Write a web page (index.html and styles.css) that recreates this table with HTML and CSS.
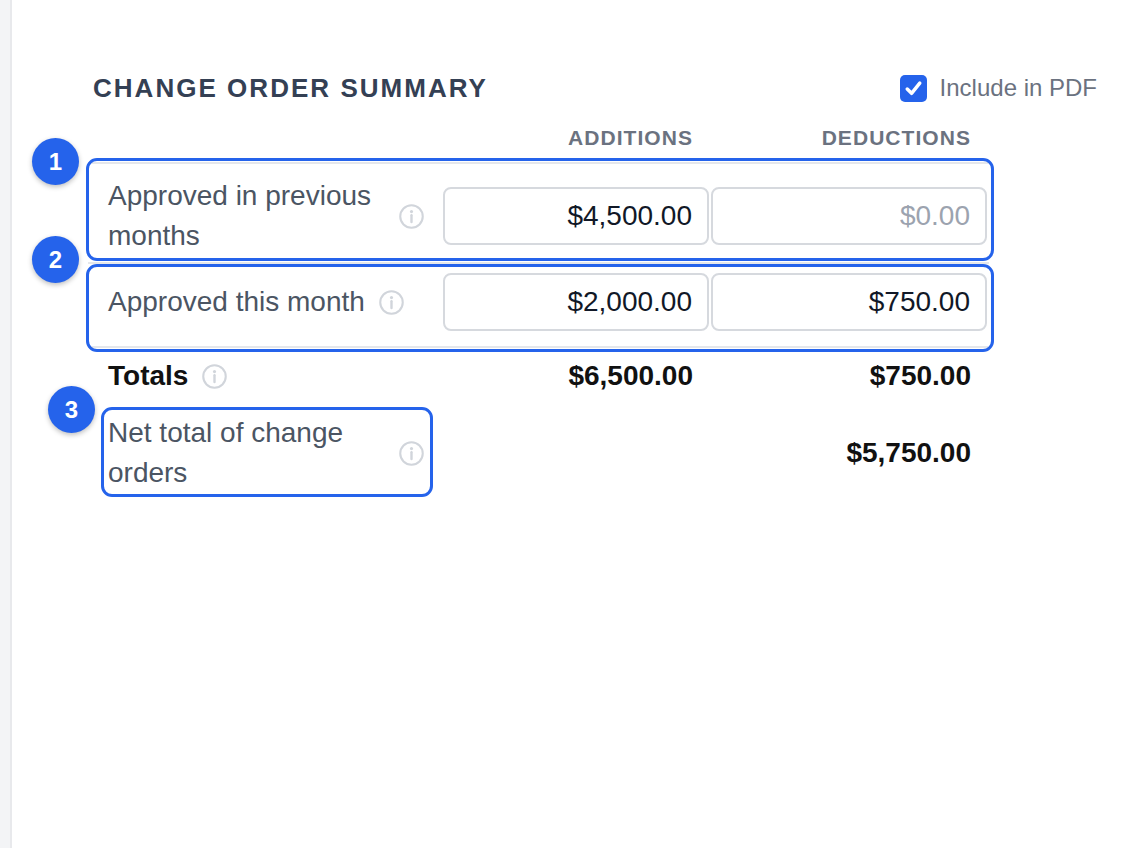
FILE: index.html
```html
<!DOCTYPE html>
<html lang="en">
<head>
<meta charset="utf-8">
<title>Change Order Summary</title>
<link rel="stylesheet" href="styles.css">
</head>
<body>
<div class="page">
  <aside class="rail"></aside>
  <main class="main">
    <section class="summary">
      <header class="summary-head">
        <h2 class="title">CHANGE ORDER SUMMARY</h2>
        <label class="pdf-toggle">
          <span class="checkbox">
            <svg viewBox="0 0 28 28" width="27" height="27"><path d="M7.5 14.5 L12 19 L20.5 8.5" fill="none" stroke="#fff" stroke-width="3.6" stroke-linecap="round" stroke-linejoin="round"/></svg>
          </span>
          <span class="pdf-text">Include in PDF</span>
        </label>
      </header>

      <div class="table">
        <div class="grid colheads">
          <div></div>
          <div class="colhead add">ADDITIONS</div>
          <div class="colhead ded">DEDUCTIONS</div>
        </div>

        <div class="grid row row-prev">
          <div class="label-cell">
            <span class="label-text">Approved in previous months</span>
            <svg class="info" viewBox="0 0 24 24" width="25" height="25"><circle cx="12" cy="12" r="10.8" fill="none" stroke="#d1d5db" stroke-width="2"/><circle cx="12" cy="7.3" r="1.5" fill="#d1d5db"/><path d="M12 10.8 V17.3" stroke="#d1d5db" stroke-width="2.3" stroke-linecap="round"/></svg>
          </div>
          <div class="cell add-cell"><div class="input">$4,500.00</div></div>
          <div class="cell ded-cell"><div class="input placeholder">$0.00</div></div>
        </div>

        <div class="grid row row-month">
          <div class="label-cell">
            <span class="label-text">Approved this month</span>
            <svg class="info" viewBox="0 0 24 24" width="25" height="25"><circle cx="12" cy="12" r="10.8" fill="none" stroke="#d1d5db" stroke-width="2"/><circle cx="12" cy="7.3" r="1.5" fill="#d1d5db"/><path d="M12 10.8 V17.3" stroke="#d1d5db" stroke-width="2.3" stroke-linecap="round"/></svg>
          </div>
          <div class="cell add-cell"><div class="input">$2,000.00</div></div>
          <div class="cell ded-cell"><div class="input">$750.00</div></div>
        </div>

        <div class="grid totals">
          <div class="label-cell">
            <span class="label-text strong">Totals</span>
            <svg class="info" viewBox="0 0 24 24" width="25" height="25"><circle cx="12" cy="12" r="10.8" fill="none" stroke="#d1d5db" stroke-width="2"/><circle cx="12" cy="7.3" r="1.5" fill="#d1d5db"/><path d="M12 10.8 V17.3" stroke="#d1d5db" stroke-width="2.3" stroke-linecap="round"/></svg>
          </div>
          <div class="value add-val">$6,500.00</div>
          <div class="value ded-val">$750.00</div>
        </div>

        <div class="grid net">
          <div class="label-cell">
            <span class="label-text">Net total of change orders</span>
            <svg class="info" viewBox="0 0 24 24" width="25" height="25"><circle cx="12" cy="12" r="10.8" fill="none" stroke="#d1d5db" stroke-width="2"/><circle cx="12" cy="7.3" r="1.5" fill="#d1d5db"/><path d="M12 10.8 V17.3" stroke="#d1d5db" stroke-width="2.3" stroke-linecap="round"/></svg>
          </div>
          <div></div>
          <div class="value ded-val">$5,750.00</div>
        </div>
      </div>

      <div class="callout box-1"></div>
      <div class="callout box-2"></div>
      <div class="callout box-3"></div>
      <div class="badge badge-1">1</div>
      <div class="badge badge-2">2</div>
      <div class="badge badge-3">3</div>
    </section>
  </main>
</div>
</body>
</html>
```

FILE: styles.css
```css
* { box-sizing: border-box; }

html, body {
  margin: 0;
  padding: 0;
  background: #ffffff;
  font-family: "Liberation Sans", Arial, Helvetica, sans-serif;
}

.page {
  display: flex;
  min-height: 848px;
}

.rail {
  width: 12px;
  flex: 0 0 12px;
  background: #f3f4f6;
  border-right: 2px solid #e8e9ec;
}

.main {
  flex: 1;
  padding: 68px 33px 0 76px;
}

.summary {
  position: relative;
}

.summary-head {
  display: flex;
  justify-content: space-between;
  align-items: center;
  height: 40px;
}

.title {
  margin: 0 0 0 5px;
  font-size: 26px;
  font-weight: 700;
  letter-spacing: 0.078em;
  color: #344054;
  line-height: 40px;
}

.pdf-toggle {
  display: flex;
  align-items: center;
  gap: 13px;
}

.checkbox {
  width: 27px;
  height: 27px;
  border-radius: 5px;
  background: #2563eb;
  display: flex;
  align-items: center;
  justify-content: center;
}

.checkbox svg { display: block; }

.pdf-text {
  font-size: 24px;
  color: #6b7280;
}

.table {
  width: 901px;
}

.grid {
  display: grid;
  grid-template-columns: 353px 268px 280px;
  align-items: center;
}

.colheads {
  margin-top: 10px;
  height: 40px;
  margin-bottom: 4px;
}

.colhead {
  text-align: right;
  font-size: 21px;
  font-weight: 700;
  letter-spacing: 0.05em;
  color: #6b7280;
}

.colhead.add { padding-right: 16px; }
.colhead.ded { padding-right: 18px; }

.row {
  border-top: 2px solid #e5e7eb;
}

.row-prev { padding: 12px 0 6px; }
.row-month {
  padding: 9px 0 15px;
  border-bottom: 2px solid #e5e7eb;
}

.label-cell {
  display: flex;
  align-items: center;
  gap: 14px;
  padding: 0 17px 0 20px;
}

.label-text {
  font-size: 28px;
  line-height: 40px;
  color: #4b5563;
}

.label-text.strong {
  font-weight: 700;
  color: #111111;
}

.info { flex: 0 0 25px; display: block; }

.add-cell { padding-left: 2px; }
.ded-cell { padding: 0 2px; }

.input {
  height: 58px;
  border: 2px solid #d6d9de;
  border-radius: 8px;
  background: #fff;
  display: flex;
  align-items: center;
  justify-content: flex-end;
  padding-right: 15px;
  font-size: 28px;
  color: #111827;
}

.input.placeholder { color: #9ca3af; }

.totals { padding: 8px 0; }
.net { padding-top: 9px; }

.value {
  text-align: right;
  font-size: 28px;
  font-weight: 700;
  color: #111111;
  line-height: 40px;
}

.add-val { padding-right: 16px; }
.ded-val { padding-right: 18px; }

.callout {
  position: absolute;
  border: 3px solid #2563eb;
  border-radius: 11px;
  pointer-events: none;
}

.box-1 { left: -2px; top: 90px; width: 908px; height: 103px; }
.box-2 { left: -2px; top: 196px; width: 908px; height: 88px; }
.box-3 { left: 13px; top: 339px; width: 332px; height: 90px; }

.badge {
  position: absolute;
  width: 47px;
  height: 47px;
  border-radius: 50%;
  background: #2563eb;
  color: #ffffff;
  font-size: 24px;
  font-weight: 700;
  display: flex;
  align-items: center;
  justify-content: center;
  box-shadow: 0 2px 5px rgba(0, 0, 0, 0.25);
}

.badge-1 { left: -56px; top: 70px; }
.badge-2 { left: -56px; top: 168px; }
.badge-3 { left: -40px; top: 318px; }
```
